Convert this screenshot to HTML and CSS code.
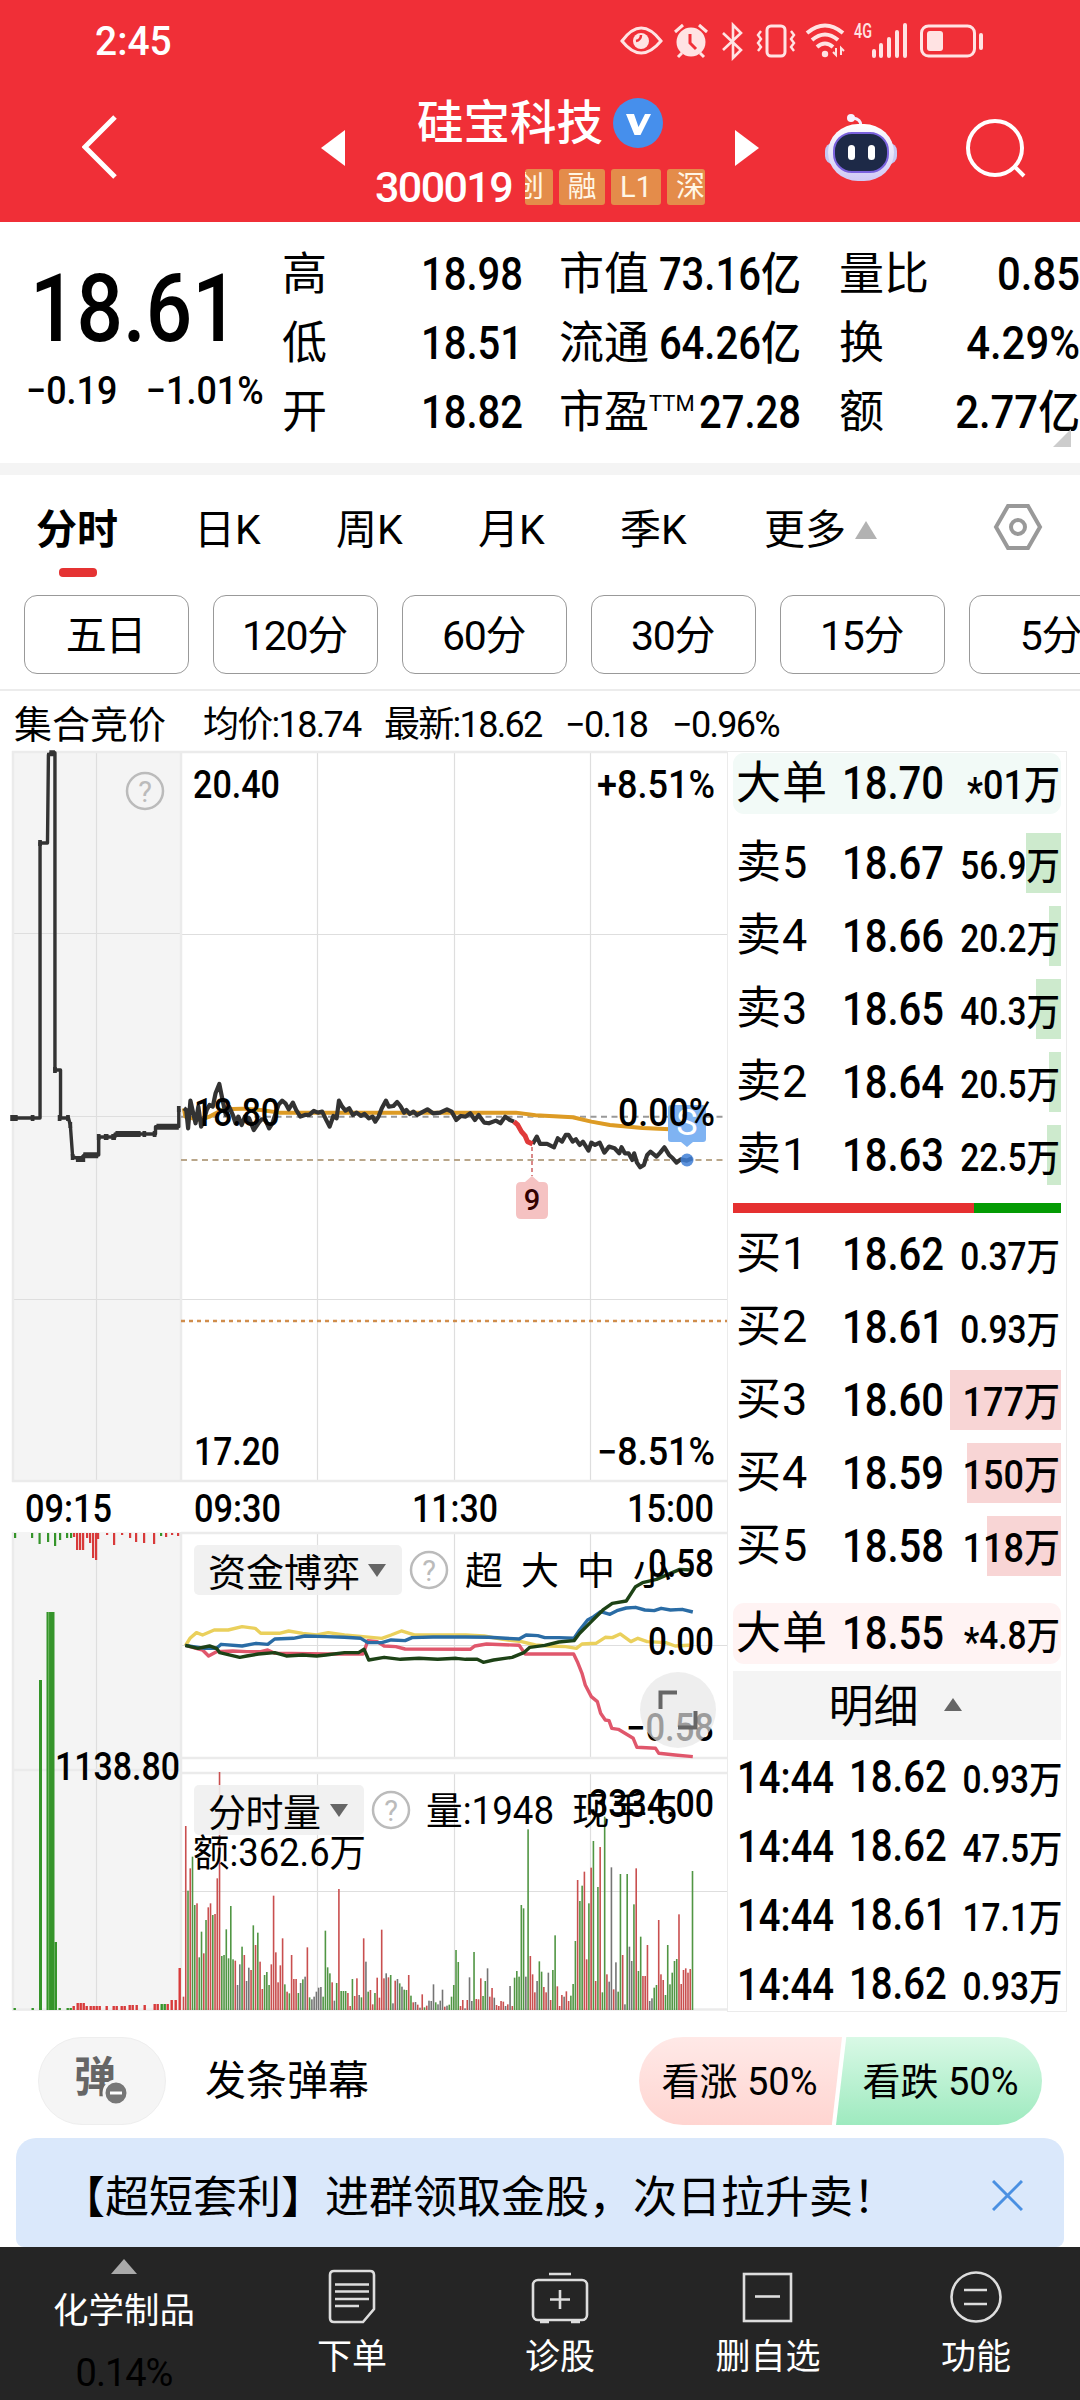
FILE: index.html
```html
<!DOCTYPE html>
<html lang="zh-CN">
<head>
    <meta charset="UTF-8" />
    <meta name="viewport" content="width=device-width, initial-scale=1.0"/>
    <title>硅宝科技 300019</title>
    <link rel="stylesheet" href="styles.css">
</head>
<body>
    <header class="top">
        <div class="status-bar">
            <span class="clock num">2:45</span>
            <svg class="status-icons" width="366" height="40" viewBox="619 20 366 40" fill="none" stroke="#ffe3e3" stroke-width="3">
                <!-- eye -->
                <path d="M622 40Q641 14 661 40Q641 64 622 40Z"/>
                <circle cx="641" cy="40" r="8" fill="#ffe3e3" stroke="none"/>
                <path d="M641 34a6 6 0 0 1-5 6" stroke="#f02f37" stroke-width="2.5"/>
                <!-- alarm -->
                <circle cx="691" cy="41" r="14.5" fill="#ffe3e3" stroke="none"/>
                <path d="M675 31l8-7M707 31l-8-7M682 52l-4 4M700 52l4 4"/>
                <path d="M690 33v9l6 6" stroke="#f02f37"/>
                <!-- bluetooth -->
                <path d="M723 32l18 17-8 8V24l8 8-18 17" stroke-width="2.6"/>
                <!-- vibrate -->
                <rect x="767" y="25" width="18" height="30" rx="4"/>
                <path d="M761 30l-3 4 3 4-3 4 3 4-3 4M791 30l3 4-3 4 3 4-3 4 3 4" stroke-width="2.4"/>
                <!-- wifi -->
                <path d="M807 32q18-15 36 0M812 39q13-11 26 0M817 46q8-7 16 0" stroke-width="4"/>
                <circle cx="825" cy="53" r="3.2" fill="#ffe3e3" stroke="none"/>
                <path d="M836 47v7l-3-3M841 54v-7l3 3" stroke-width="2"/>
                <!-- signal -->
                <path d="M874 50v5M881 44v11M889 38v17M897 31v24M905 24v31" stroke-width="4" stroke-linecap="round"/>
                <!-- battery -->
                <rect x="921.5" y="25" width="53" height="30" rx="7"/>
                <rect x="927" y="30" width="16" height="20" rx="3" fill="#ffe3e3" stroke="none"/>
                <path d="M981 34v13" stroke-width="4" stroke-linecap="round"/>
                <text x="854" y="37" class="net-type" textLength="18" lengthAdjust="spacingAndGlyphs">4G</text>
            </svg>
        </div>
        <nav class="title-bar">
            <svg class="back" width="36" height="66" viewBox="0 0 36 66" fill="none" stroke="#fff" stroke-width="5"><path d="M33 2L3 32l30 30"/></svg>
            <svg class="prev" width="24" height="36" viewBox="0 0 24 36"><path d="M24 0v36L0 18z" fill="#fff"/></svg>
            <div class="stock">
                <div class="stock-name">硅宝科技
                    <svg width="50" height="50" viewBox="0 0 50 50"><circle cx="25" cy="25" r="25" fill="#468fec"/><path d="M13 16h8l4.500 13L32 16h6L27.500 37h-6z" fill="#fff"/></svg>
                </div>
                <div class="stock-code">
                    <span class="code">300019</span>
                    <div class="tags"><i class="cut-left"><b>创</b></i><i>融</i><i class="wide">L1</i><i class="cut-right">深</i></div>
                </div>
            </div>
            <svg class="next" width="24" height="36" viewBox="0 0 24 36"><path d="M0 0v36l24-18z" fill="#fff"/></svg>
            <svg class="robot" width="72" height="68" viewBox="0 0 72 68">
                <defs><linearGradient id="helmet" x1="0" y1="0" x2="0" y2="1"><stop offset="0" stop-color="#fff"/><stop offset="1" stop-color="#cfc9f5"/></linearGradient></defs>
                <path d="M36 12q0-7-8-8" fill="none" stroke="#f3eeff" stroke-width="3"/>
                <circle cx="26" cy="4" r="4" fill="#f6f2ff"/>
                <rect x="0" y="29" width="72" height="21" rx="8" fill="#c6c7f2"/>
                <rect x="3" y="10" width="66" height="57" rx="30" fill="url(#helmet)"/>
                <rect x="9" y="19" width="54" height="39" rx="18" fill="#1d2947" stroke="#7a62dd" stroke-width="2"/>
                <rect x="23" y="31" width="7" height="15" rx="3.5" fill="#fff"/>
                <rect x="43" y="31" width="7" height="15" rx="3.5" fill="#fff"/>
            </svg>
            <svg class="search" width="62" height="62" viewBox="0 0 62 62" fill="none" stroke="#fff" stroke-width="4"><circle cx="29" cy="31" r="27"/><path d="M48 49l10 10"/></svg>
        </nav>
    </header>

    <section class="quote">
        <div class="price-box">
            <div class="price num">18.61</div>
            <div class="change num"><span>−0.19</span><span>−1.01%</span></div>
        </div>
        <dl class="stats first">
            <dt>高</dt><dd class="num">18.98</dd>
            <dt>低</dt><dd class="num">18.51</dd>
            <dt>开</dt><dd class="num">18.82</dd>
        </dl>
        <dl class="stats second">
            <dt>市值</dt><dd class="num">73.16亿</dd>
            <dt>流通</dt><dd class="num">64.26亿</dd>
            <dt>市盈<sup>TTM</sup></dt><dd class="num">27.28</dd>
        </dl>
        <dl class="stats third">
            <dt>量比</dt><dd class="num">0.85</dd>
            <dt>换</dt><dd class="num">4.29%</dd>
            <dt>额</dt><dd class="num">2.77亿</dd>
        </dl>
        <svg class="corner" width="18" height="18" viewBox="0 0 18 18"><path d="M18 0v18H0z" fill="#ccc"/></svg>
    </section>

    <div class="tabs">
        <span class="tab active">分时</span>
        <span class="tab">日K</span>
        <span class="tab">周K</span>
        <span class="tab">月K</span>
        <span class="tab">季K</span>
        <span class="tab more">更多<svg width="22" height="18" viewBox="0 0 22 18"><path d="M11 0l11 18H0z" fill="#b2b2b2"/></svg></span>
        <svg class="setting" width="50" height="46" viewBox="0 0 50 46" fill="none" stroke="#999" stroke-width="4"><path d="M15 2h20l12 21-12 21H15L3 23z"/><circle cx="25" cy="23" r="7"/></svg>
    </div>
    <div class="periods">
        <span>五日</span><span>120分</span><span>60分</span><span>30分</span><span>15分</span><span>5分</span>
    </div>

    <div class="info">
        <span class="auction">集合竞价</span>
        <span class="avg">均价:18.74</span>
        <span class="last">最新:18.62</span>
        <span class="diff">−0.18</span>
        <span class="pct">−0.96%</span>
    </div>

    <main class="board">
        <svg class="chart" width="727" height="1262" viewBox="0 750 727 1262">
            <!-- panels and grid -->
            <rect x="12" y="751" width="169" height="731" fill="#f4f4f4"/>
            <rect x="12" y="1532" width="169" height="479" fill="#f4f4f4"/>
            <g class="grid">
                <path d="M96.5 751V1481M96.5 1532V2010M12 933.5H181M12 1116.5H181M12 1299.5H181M317.5 752V1481M454.5 752V1481M590.5 752V1481M181 934.5H727M181 1299.5H727"/>
                <path d="M317.5 1533V1758M454.5 1533V1758M590.5 1533V1758M181 1645.5H727M317.5 1773V2010M454.5 1773V2010M590.5 1773V2010M181 1891.5H727"/>
            </g>
            <g class="frame">
                <path d="M12 752H727M13 751V1482M181 751V1482M12 1481H727M13 1532V2010M181 1532V2010M181 1533H727M181 1758H727M181 1773H727M12 1770H181M12 2009.5H727"/>
            </g>
            <path d="M181 1116.7H727" stroke="#999" stroke-width="2" stroke-dasharray="6 4.5"/>
            <path d="M181 1160H727" stroke="#b9a68a" stroke-width="2" stroke-dasharray="6 4.5"/>
            <path d="M181 1321H727" stroke="#d08d4c" stroke-width="2.5" stroke-dasharray="4 4"/>

            <g id="volume"></g>
            <g id="auction"></g>

            <!-- price lines -->
            <g class="line" transform="translate(0 740) scale(.4656 .3333)">
                <path stroke="#333" stroke-width="2.5" d="M28 1134H86V309H102L104 45L112 38H118V990H130V1134H147L151 1155L156 1250L172 1258L181 1245H212V1191H247V1182H334V1160H384V1107"/>
                <path class="dots" d="M22 1134h16M66 1134h8M82 309h8M101 47h6M106 40h12M114 990h8M124 1134h8M142 1134h8M147 1155h8M152 1251h8M163 1257h20M179 1246h32M208 1191h8M223 1191h10M239 1191h10M248 1182h54M306 1182h8M328 1182h8M336 1160h48M380 1107h8"/>
                <path stroke="#fff4c4" stroke-width="7" d="M395 1105L398 1130L430 1140L450 1130L480 1108L520 1106L560 1110L600 1118H1108L1150 1126L1230 1132L1270 1145L1310 1155L1380 1164L1440 1168H1490"/>
                <path class="avg-line" d="M395 1105L398 1130L430 1140L450 1130L480 1108L520 1106L560 1110L600 1118H1108L1150 1126L1230 1132L1270 1145L1310 1155L1380 1164L1440 1168H1490"/>
                <path class="price-line" d="M395 1105L400 1110L404 1165L409 1082L415 1120L420 1150L426 1100L432 1160L438 1140L444 1110L450 1095L457 1100L463 1060L471 1032L478 1080L485 1125L492 1100L500 1125L506 1150L512 1130L519 1155L526 1130L535 1135L545 1170L555 1150L562 1138L570 1140L578 1165L585 1150L592 1120L598 1095L606 1082L613 1090L620 1108L629 1088L636 1110L645 1130L655 1125L664 1125L674 1113L683 1118L692 1115L700 1138L708 1160L716 1128L723 1135L728 1082L735 1100L742 1112L750 1105L758 1125L766 1118L775 1128L783 1122L792 1135L800 1130L806 1145L813 1130L820 1105L829 1082L835 1100L845 1098L853 1086L860 1098L868 1118L873 1110L880 1122L888 1115L896 1125L905 1118L918 1108L930 1120L945 1118L960 1108L970 1115L980 1140L990 1128L1000 1130L1010 1120L1020 1140L1028 1125L1040 1148L1050 1150L1065 1142L1075 1150L1085 1130L1095 1140L1104 1145"/>
                <path class="price-line" d="M1144 1212L1153 1190L1160 1212L1175 1212L1190 1222L1198 1195L1207 1205L1215 1185L1221 1185L1230 1205L1237 1198L1245 1215L1252 1205L1264 1232L1270 1208L1278 1215L1288 1208L1298 1238L1308 1220L1320 1225L1330 1240L1335 1222L1342 1240L1350 1240L1358 1260L1362 1240L1368 1268L1375 1282L1383 1275L1390 1245L1397 1235L1410 1250L1418 1238L1427 1222L1437 1245L1445 1255L1453 1268L1462 1258L1475 1262L1487 1255"/>
                <path class="turn-line" d="M1104 1145L1112 1155L1120 1175L1128 1188L1133 1205L1144 1212"/>
            </g>

            <!-- sell point and turning point -->
            <path d="M672 1105h31a3 3 0 0 1 3 3v31a3 3 0 0 1-3 3h-10l-6 5-6-5h-10a3 3 0 0 1-3-3v-31a3 3 0 0 1 3-3z" fill="#7fb3f2"/>
            <text class="mark-s" x="687" y="1135">S</text>
            <circle cx="687" cy="1160" r="6.5" fill="#3f7fd6" fill-opacity=".85"/>
            <path d="M532 1147V1176" stroke="#c03a3a" stroke-width="1.2" stroke-dasharray="4 3"/>
            <path d="M532 1176l7 6h4q5 0 5 5v27q0 5-5 5h-22q-5 0-5-5v-27q0-5 5-5h4z" fill="#f5c2c2"/>
            <text class="mark-9" x="532" y="1210">9</text>

            <!-- money flow lines -->
            <g class="line flow" transform="translate(0 1520) scale(.4656 .3333)">
                <path stroke="#ead05c" d="M398 378L408 355L422 338L435 345L460 330L490 330L520 320L548 325L560 340L600 340L620 333L650 340L680 345L705 338L740 345L780 350L820 355L840 345L862 333L890 345L930 345L1000 345L1040 348L1080 358L1120 365L1150 375L1180 378L1215 380L1238 385L1250 372L1280 370L1300 352L1315 353L1332 342L1355 365L1370 355L1390 365L1430 368L1450 378L1488 375"/>
                <path stroke="#e0576c" d="M398 376L435 390L448 408L465 395L500 393L530 395L560 395L575 390L590 400L700 402L780 402L790 362L810 365L825 378L850 380L870 387L1010 388L1020 378L1045 372L1115 376L1128 402L1232 402L1240 425L1250 460L1257 495L1270 530L1283 545L1290 580L1300 600L1308 602L1314 625L1328 628L1360 655L1368 682L1408 685L1415 700L1450 705L1488 710"/>
                <path stroke="#2a6ca5" d="M398 376L440 385L465 385L475 373L520 378L550 370L575 373L590 357L630 355L655 348L700 350L740 352L775 355L790 368L820 368L840 360L870 362L885 353L930 351L1000 351L1050 352L1115 357L1130 345L1155 347L1170 353L1200 353L1233 355L1245 330L1262 300L1275 290L1290 275L1310 283L1325 272L1345 264L1365 262L1385 270L1405 272L1420 265L1440 270L1465 268L1488 276"/>
                <path stroke="#1d4216" d="M398 376L425 385L450 378L465 385L472 398L515 412L530 408L555 402L590 398L615 408L650 405L680 408L700 405L740 398L770 398L782 388L792 420L825 412L860 418L900 415L940 418L980 415L1000 418L1025 418L1038 427L1060 420L1100 412L1125 398L1138 382L1170 376L1200 366L1233 362L1245 340L1270 305L1295 270L1315 250L1345 243L1365 200L1380 188L1410 178L1440 160L1460 148L1485 150"/>
            </g>

            <!-- index selectors -->
            <rect x="194" y="1545" width="208" height="50" rx="5" fill="#f0f0f0" fill-opacity=".9"/>
            <path d="M368 1564h18l-9 13z" fill="#666"/>
            <rect x="194" y="1785" width="170" height="50" rx="5" fill="#f0f0f0" fill-opacity=".9"/>
            <path d="M330 1804h18l-9 13z" fill="#666"/>
            <g class="help">
                <circle cx="145" cy="791" r="18"/><text x="145" y="802">?</text>
                <circle cx="429" cy="1570" r="18"/><text x="429" y="1581">?</text>
                <circle cx="391" cy="1810" r="18"/><text x="391" y="1821">?</text>
            </g>

            <g class="cn">
                <text x="208" y="1586" textLength="152">资金博弈</text>
                <text x="465" y="1584">超</text>
                <text x="521" y="1584">大</text>
                <text x="577" y="1584">中</text>
                <text x="633" y="1584">小</text>
                <text x="208" y="1826" textLength="113">分时量</text>
                <text x="426" y="1824" textLength="128" lengthAdjust="spacingAndGlyphs">量:1948</text>
                <text x="572" y="1824" textLength="105" lengthAdjust="spacingAndGlyphs">现手:5</text>
                <text x="193" y="1866" textLength="173" lengthAdjust="spacingAndGlyphs">额:362.6万</text>
            </g>
            <g class="axis">
                <text x="193" y="798" textLength="87" lengthAdjust="spacingAndGlyphs">20.40</text>
                <text x="597" y="798" textLength="118" lengthAdjust="spacingAndGlyphs">+8.51%</text>
                <text x="194" y="1126" textLength="86" lengthAdjust="spacingAndGlyphs">18.80</text>
                <text x="618" y="1126" textLength="97" lengthAdjust="spacingAndGlyphs">0.00%</text>
                <text x="194" y="1465" textLength="86" lengthAdjust="spacingAndGlyphs">17.20</text>
                <text x="597" y="1465" textLength="118" lengthAdjust="spacingAndGlyphs">−8.51%</text>
                <text x="25" y="1522" textLength="87" lengthAdjust="spacingAndGlyphs">09:15</text>
                <text x="194" y="1522" textLength="87" lengthAdjust="spacingAndGlyphs">09:30</text>
                <text x="412" y="1522" textLength="86" lengthAdjust="spacingAndGlyphs">11:30</text>
                <text x="627" y="1522" textLength="87" lengthAdjust="spacingAndGlyphs">15:00</text>
                <text x="648" y="1577" textLength="66" lengthAdjust="spacingAndGlyphs">0.58</text>
                <text x="648" y="1655" textLength="66" lengthAdjust="spacingAndGlyphs">0.00</text>
                <text x="626" y="1741" textLength="88" lengthAdjust="spacingAndGlyphs">−0.58</text>
                <text x="55" y="1780" textLength="125" lengthAdjust="spacingAndGlyphs">1138.80</text>
                <text x="589" y="1817" textLength="125" lengthAdjust="spacingAndGlyphs">3334.00</text>
            </g>

            <!-- rotate button -->
            <circle cx="678" cy="1710" r="38" fill="#e6e6e6" fill-opacity=".68"/>
            <path d="M660.500 1709V1692.500H677M678 1727.500H695.500V1711" fill="none" stroke="#666" stroke-width="4"/>
        </svg>

        <aside class="book">
            <div class="row big sell"><span class="side">大单</span><span class="bid num">18.70</span><span class="vol large num"><b class="star">*</b>01万</span></div>
            <div class="orders">
                <div class="row sell"><span class="side">卖5</span><span class="bid num">18.67</span><span class="vol num">56.9万</span><i style="width:35px"></i></div>
                <div class="row sell"><span class="side">卖4</span><span class="bid num">18.66</span><span class="vol num">20.2万</span><i style="width:12px"></i></div>
                <div class="row sell"><span class="side">卖3</span><span class="bid num">18.65</span><span class="vol num">40.3万</span><i style="width:25px"></i></div>
                <div class="row sell"><span class="side">卖2</span><span class="bid num">18.64</span><span class="vol num">20.5万</span><i style="width:12px"></i></div>
                <div class="row sell"><span class="side">卖1</span><span class="bid num">18.63</span><span class="vol num">22.5万</span><i style="width:14px"></i></div>
            </div>
            <div class="ratio"><i style="width:241px"></i></div>
            <div class="orders">
                <div class="row buy"><span class="side">买1</span><span class="bid num">18.62</span><span class="vol num">0.37万</span></div>
                <div class="row buy"><span class="side">买2</span><span class="bid num">18.61</span><span class="vol num">0.93万</span></div>
                <div class="row buy"><span class="side">买3</span><span class="bid num">18.60</span><span class="vol large num">177万</span><i style="width:111px"></i></div>
                <div class="row buy"><span class="side">买4</span><span class="bid num">18.59</span><span class="vol large num">150万</span><i style="width:94px"></i></div>
                <div class="row buy"><span class="side">买5</span><span class="bid num">18.58</span><span class="vol large num">118万</span><i style="width:74px"></i></div>
            </div>
            <div class="row big buy"><span class="side">大单</span><span class="bid num">18.55</span><span class="vol num"><b class="star">*</b>4.8万</span></div>
            <div class="detail-head">明细<svg width="18" height="13" viewBox="0 0 18 13"><path d="M9 0l9 13H0z" fill="#666"/></svg></div>
            <div class="details">
                <div class="deal"><span class="time num">14:44</span><span class="bid num">18.62</span><span class="vol num">0.93万</span></div>
                <div class="deal"><span class="time num">14:44</span><span class="bid num">18.62</span><span class="vol num">47.5万</span></div>
                <div class="deal"><span class="time num">14:44</span><span class="bid num">18.61</span><span class="vol num">17.1万</span></div>
                <div class="deal"><span class="time num">14:44</span><span class="bid num">18.62</span><span class="vol num">0.93万</span></div>
            </div>
        </aside>
    </main>

    <div class="danmu">
        <div class="danmu-switch">弹<svg width="30" height="30" viewBox="0 0 30 30"><circle cx="15" cy="15" r="12" fill="#777" stroke="#f5f5f5" stroke-width="3"/><path d="M9 15h12" stroke="#fff" stroke-width="3"/></svg></div>
        <span class="danmu-input">发条弹幕</span>
        <div class="vote">
            <span class="up">看涨 50%</span>
            <span class="down">看跌 50%</span>
        </div>
    </div>

    <div class="banner">
        <span>【超短套利】进群领取金股，次日拉升卖！</span>
        <svg width="31" height="31" viewBox="0 0 31 31" stroke="#4a90e2" stroke-width="3"><path d="M1 1l29 29M30 1L1 30"/></svg>
    </div>

    <footer class="bottom">
        <div class="sector">
            <svg width="26" height="15" viewBox="0 0 26 15"><path d="M13 0l13 15H0z" fill="#aaa"/></svg>
            <span>化学制品</span>
            <em>0.14%</em>
        </div>
        <div class="item">
            <svg width="60" height="58" viewBox="0 0 60 58"><path d="M12 3h36q4 0 4 4v34L41 54H12q-4 0-4-4V7q0-4 4-4z"/><path d="M13 16.500h34M13 23.500h34M13 31h34M13 38h24"/></svg>
            <span>下单</span>
        </div>
        <div class="item">
            <svg width="60" height="58" viewBox="0 0 60 58"><rect x="3" y="12" width="54" height="40" rx="5"/><path d="M19 6h22M20 31.500h20M30 22v19"/><path d="M10 54h9M41 54h9"/></svg>
            <span>诊股</span>
        </div>
        <div class="item">
            <svg width="60" height="58" viewBox="0 0 60 58"><rect x="6" y="6" width="47" height="47"/><path d="M17 28.500h25"/></svg>
            <span>删自选</span>
        </div>
        <div class="item">
            <svg width="60" height="58" viewBox="0 0 60 58"><circle cx="30" cy="29" r="24.500"/><path d="M18 22h23M18 36h23"/></svg>
            <span>功能</span>
        </div>
    </footer>

    <script src="chart.js"></script>
</body>
</html>
```
FILE: styles.css
```css
/* Basic Styles */
* {
    box-sizing: border-box;
}

body {
    margin: 0;
    width: 1080px;
    height: 2400px;
    overflow: hidden;
    display: flex;
    flex-direction: column;
    background: #fff;
    color: #000;
    font-family: Roboto, "Noto Sans CJK SC", sans-serif;
    font-size: 40px;
    line-height: 1;
    white-space: nowrap;
}

svg {
    display: block;
    flex: none;
}

i, em {
    font-style: normal;
}

/* narrow digits */
.num {
    font-weight: 500;
    transform: scaleX(.87);
    transform-origin: left;
}

/* Header */
.top {
    height: 222px;
    flex: none;
    background: #f02f37;
    color: #fff;
}

.status-bar {
    height: 82px;
    padding: 0 95px;
    display: flex;
    justify-content: space-between;
    align-items: center;
}

.clock {
    font-size: 41px;
    transform: scaleX(.95);
}

.net-type {
    font-size: 20px;
    font-weight: 500;
    fill: #ffe3e3;
    stroke: none;
}

.title-bar {
    height: 132px;
    padding-left: 82px;
    display: flex;
    align-items: center;
}

.prev {
    margin-left: 203px;
}

.stock {
    width: 390px;
    padding-top: 14px;
}

.stock-name,
.stock-code {
    height: 64px;
    display: flex;
    justify-content: center;
    align-items: center;
}

.stock-name {
    gap: 10px;
    font-size: 46.5px;
    font-weight: 500;
}

.stock-code {
    gap: 13px;
    font-size: 43px;
}

.code {
    font-weight: 500;
    letter-spacing: -1.6px;
}

.tags {
    display: flex;
    gap: 6px;
}

.tags i {
    width: 46px;
    height: 36px;
    border-radius: 3px;
    background: #e48c4a;
    color: #fff6e5;
    font-size: 29px;
    line-height: 37px;
    text-align: center;
    overflow: hidden;
}

.tags .wide {
    width: 50px;
}

.tags .cut-left {
    width: 28px;
    display: flex;
    justify-content: flex-end;
    padding-right: 9px;
}

.tags .cut-left b {
    font-weight: 400;
}

.tags .cut-right {
    width: 38px;
    padding-left: 9px;
    text-align: left;
}

.robot {
    margin-left: 66px;
}

.search {
    margin-left: 69px;
}

/* Quote */
.quote {
    position: relative;
    height: 253px;
    flex: none;
    display: flex;
    padding-top: 18px;
    border-bottom: 12px solid #f4f4f4;
}

.price-box {
    width: 282px;
    padding-left: 28px;
}

.price {
    margin-top: 19px;
    font-size: 94px;
    line-height: 100px;
    transform: translateX(2px) scaleX(.87);
}

.change {
    display: flex;
    gap: 31px;
    margin-top: 12px;
    font-size: 39px;
    line-height: 40px;
    transform: translateX(-2px) scaleX(.92);
}

.stats {
    margin: 0;
    display: grid;
    grid-template-columns: 90px minmax(0, 1fr);
    grid-auto-rows: 69px;
    font-size: 45px;
    line-height: 69px;
}

.stats dd {
    margin: 0;
    display: flex;
    justify-content: flex-end;
    font-size: 46px;
    transform-origin: right;
}

.stats sup {
    font-size: 22px;
    line-height: 0;
    vertical-align: 17px;
}

.first {
    width: 241px;
}

.second {
    width: 242px;
    margin-left: 36px;
}

.third {
    width: 241px;
    margin-left: 38px;
}

.third .num {
    transform: scaleX(.91);
}

.corner {
    position: absolute;
    right: 9px;
    bottom: 16px;
}

/* Period tabs */
.tabs {
    height: 120px;
    flex: none;
    display: flex;
    align-items: flex-start;
    padding: 34px 0 0 36px;
    font-size: 41px;
    line-height: 42px;
}

.tab {
    width: 142px;
    padding-left: 15px;
}

.tab.active {
    width: 143px;
    padding: 0;
    font-weight: 700;
}

.tab.active::after {
    content: "";
    display: block;
    width: 38px;
    height: 9px;
    margin: 17px 0 0 23px;
    border-radius: 4px;
    background: #e53333;
}

.tab.more {
    width: 246px;
    display: flex;
    align-items: center;
    gap: 9px;
    padding-left: 17px;
}

.setting {
    margin-top: -5px;
}

.periods {
    height: 96px;
    flex: none;
    display: flex;
    gap: 24px;
    padding-left: 24px;
    border-bottom: 2px solid #ececec;
}

.periods span {
    flex: none;
    width: 165px;
    height: 79px;
    border: 1.5px solid #999;
    border-radius: 13px;
    font-size: 41px;
    line-height: 80px;
    text-align: center;
    text-indent: -2px;
    letter-spacing: -1.3px;
}

.info {
    height: 59px;
    flex: none;
    display: flex;
    padding-left: 14px;
    font-size: 36px;
    line-height: 68px;
    letter-spacing: -1.7px;
}

.auction {
    width: 189px;
    font-size: 38px;
    letter-spacing: 0;
}

.avg,
.last {
    width: 181px;
}

.diff {
    width: 107px;
}

/* Chart and order book */
.board {
    height: 1262px;
    flex: none;
    display: flex;
}

.grid path {
    stroke: #dedede;
    stroke-width: 1.2;
}

.frame path {
    stroke: #ebebeb;
    stroke-width: 2.5;
}

.line path {
    fill: none;
    stroke-width: 3.4;
    stroke-linejoin: round;
    vector-effect: non-scaling-stroke;
}

.line .dots {
    stroke: #333;
    stroke-width: 6;
}

.line .price-line {
    stroke: #333;
    stroke-width: 4.2;
}

.line .avg-line {
    stroke: #dd9b25;
    stroke-width: 4;
}

.line .turn-line {
    stroke: #e03a3a;
    stroke-width: 5;
}

.axis text {
    font-size: 38px;
    font-weight: 500;
}

.cn text {
    font-size: 38px;
}

.help circle {
    fill: none;
    stroke: #bbb;
    stroke-width: 2.5;
}

.help text {
    fill: #bbb;
    font-size: 29px;
    text-anchor: middle;
}

.mark-s {
    fill: #fff;
    font-size: 36px;
    text-anchor: middle;
}

.mark-9 {
    fill: #300;
    font-size: 29px;
    font-weight: 500;
    text-anchor: middle;
}

.book {
    width: 340px;
    height: 1261px;
    margin-top: 1px;
    padding: 1px 5px 0;
    border: 1px solid #ebebeb;
}

.row,
.deal {
    position: relative;
    height: 60px;
    display: flex;
    align-items: center;
    padding: 0 1px 0 3px;
    font-size: 45px;
}

.row.big {
    height: 61px;
    border-radius: 11px;
}

.big.sell {
    background: #f2faf7;
}

.big.buy {
    margin-top: 27px;
    background: #fff3f3;
}

.orders {
    display: flex;
    flex-direction: column;
    gap: 13px;
    margin-top: 19px;
}

.side {
    width: 106px;
    padding-bottom: 1px;
    letter-spacing: 1px;
}

.bid {
    width: 104px;
    padding-bottom: 1px;
    font-size: 46px;
}

.vol {
    flex: 1;
    display: flex;
    justify-content: flex-end;
    align-items: center;
    font-size: 38px;
    padding-top: 5px;
    transform: scaleX(.88);
    transform-origin: right;
}

.vol.large {
    font-size: 40px;
    transform: scaleX(.9);
}

.star {
    font-weight: 500;
    font-size: 40px;
    height: 26px;
}

.row span {
    z-index: 1;
}

/* volume bar behind the text */
.row i {
    position: absolute;
    right: 0;
    top: 0;
    height: 60px;
    background: #cdeacd;
}

.buy i {
    background: #f8d5d5;
}

.ratio {
    height: 10px;
    margin: 18px 0 -8px;
    background: #049b04;
}

.ratio i {
    display: block;
    height: 10px;
    background: #e53030;
}

.detail-head {
    height: 69px;
    margin-top: 7px;
    display: flex;
    justify-content: center;
    align-items: center;
    gap: 25px;
    padding: 3px 4px 0 0;
    background: #f4f4f4;
    font-size: 45px;
}

.detail-head svg {
    margin-bottom: 6px;
}

.details {
    padding-top: 3px;
}

.deal {
    height: 69px;
    padding: 0 4px 0 4px;
}

.time {
    width: 112px;
    font-size: 44px;
}

.deal .bid {
    width: 100px;
    font-size: 44px;
}

/* Comments row */
.danmu {
    height: 126px;
    flex: none;
    display: flex;
    align-items: center;
    padding: 12px 38px 0;
}

.danmu-switch {
    position: relative;
    width: 128px;
    height: 88px;
    border-radius: 44px;
    border: 1px solid #eee;
    background: #f5f5f5;
    color: #666;
    font-size: 42px;
    font-weight: 700;
    line-height: 80px;
    padding-left: 35px;
}

.danmu-switch svg {
    position: absolute;
    left: 62px;
    top: 40px;
}

.danmu-input {
    flex: 1;
    margin-left: 39px;
    font-size: 41px;
    line-height: 90px;
}

.vote {
    width: 403px;
    height: 88px;
    display: flex;
    border-radius: 44px;
    overflow: hidden;
    font-size: 38px;
    line-height: 90px;
    text-align: center;
}

.up {
    width: 205px;
    padding-right: 2px;
    background: linear-gradient(#ffe9e7, #ffd5d1);
    clip-path: polygon(0 0, 100% 0, 95% 100%, 0 100%);
}

.down {
    width: 208px;
    margin-left: -6px;
    padding-left: 3px;
    background: linear-gradient(#d9f9e6, #9eeabf);
    clip-path: polygon(5% 0, 100% 0, 100% 100%, 0 100%);
}

/* Banner */
.banner {
    height: 109px;
    flex: none;
    margin: 0 16px;
    padding: 5px 41px 0 45px;
    display: flex;
    justify-content: space-between;
    align-items: center;
    border-radius: 20px 20px 8px 8px;
    background: #dae8fb;
    font-size: 44px;
}

.banner span {
    padding-top: 6px;
}

/* Bottom bar */
.bottom {
    height: 153px;
    flex: none;
    display: flex;
    background: #252525;
    color: #fff;
    font-size: 35px;
}

.sector {
    width: 248px;
    display: flex;
    flex-direction: column;
    align-items: center;
    padding-top: 12px;
}

.sector span {
    margin-top: 20px;
    font-size: 35.5px;
}

.sector em {
    margin-top: 24px;
    color: #000;
    font-size: 38px;
    letter-spacing: -1px;
}

.item {
    width: 208px;
    display: flex;
    flex-direction: column;
    align-items: center;
    padding-top: 21px;
}

.item span {
    margin-top: 14px;
}

.item svg {
    fill: none;
    stroke: #ddd;
    stroke-width: 2.6;
}
```
FILE: chart.js
```js
const SVG = "http://www.w3.org/2000/svg";

function addBar(group, x, top, bottom, width, color) {
    const rect = document.createElementNS(SVG, "rect");
    rect.setAttribute("x", x);
    rect.setAttribute("y", top);
    rect.setAttribute("width", width);
    rect.setAttribute("height", bottom - top);
    rect.setAttribute("fill", color);
    group.appendChild(rect);
}

// one entry per minute: r = up, g = down, k = flat, number = distance from the panel top
const minutes = `r740 r228 g422 r355 g320 g465 r460 g622 g545 r610 g510 r472 r460 g495 r492 r385 r66 g618 g615 g538 g625 g468 g628 r632 k705
k643 g590 r615 k693 k653 r660 g526 r585 g548 r635 r717 g675 g666 g705 r643 r437 r607 r697 r646 r565 g703 r725 g730 r615 r687
r687 g729 k699 g688 k680 r592 g742 k748 k740 k725 k713 k711 g740 g542 g652 g670 r697 k752 g699 r417 g723 g723 g723 r729 r768
g687 r738 r685 k735 g742 r565 k635 g725 r720 r763 g729 r683 r743 r539 r685 k670 r682 g675 k760 r692 k687 g700 k710 g719 g720
r675 g737 r757 k756 r764 k773 r733 g772 r767 k752 k753 k703 g757 k763 k752 k719 r770 k767 g764 g740 g705 g600 g636 r768 r750
k775 r750 k682 k753 g606 r747 r748 r685 g738 g693 k655 r740 r714 k743 r765 r768 r753 r755 k768 r763 k708 r768 g683 g663 g680
g465 g475 k680 g238 r618 r673 r727 k693 g634 g665 r711 r727 k668 r750 g660 g556 r709 r768 r735 k740 r724 r753 g737 g702 g573
r390 g453 g407 r365 r628 g460 r353 g273 r693 g411 r291 g727 g200 r673 k695 k352 r718 k637 g725 g372 r615 k763 g372 k590 k633
g463 r355 g663 g560 r678 r678 r585 k753 k745 g713 g705 r510 r673 r690 g735 g585 g703 g668 g633 g627 r493 r702 r660 r655 r668
r657 g363`.split(/\s+/);

const volume = document.getElementById("volume");
const colors = { r: "#c94f4f", g: "#519644", k: "#757575" };
const step = (692.5 - 183.5) / (minutes.length - 1);
minutes.forEach((item, i) => {
    addBar(volume, 182.7 + i * step, 1750 + Number(item.slice(1)) / 3, 2010, 1.6, colors[item[0]]);
});

// call auction: unmatched volume hangs from the top, matched volume stands at the bottom
const auction = document.getElementById("auction");
const green = "#35942a";
const red = "#d83a3a";
[[15, 5, green], [32, 5, green], [39.5, 11, green], [48, 9, green], [55, 13, green], [60, 7, green], [67, 5, green], [71, 5, green],
 [74, 4, red], [77, 17, red], [80, 17, red], [83, 17, red], [87, 5, red], [90, 10, red], [93, 25, red], [96, 27, red], [98, 6, red],
 [107, 2, red], [114, 12, red], [122, 2, red], [130, 5, red], [136, 9, red], [144, 10, red], [154, 11, red], [161, 3, green],
 [166, 4, red], [172, 2, red], [178, 3, red]].forEach(([x, h, c]) => addBar(auction, x - 1, 1533, 1533 + h, 2.2, c));
addBar(auction, 39, 1680, 2010, 3, green);
addBar(auction, 46.5, 1612, 2010, 8, green);
addBar(auction, 48.3, 1612, 2010, 0.8, "#7cc070");
addBar(auction, 54.5, 1942, 2010, 2.5, green);
[[15, 2, green], [33, 2, green], [60, 2, green], [68, 2, green], [71, 2, green], [74, 4, red], [78, 7, red], [81, 7, red], [84, 7, red],
 [87, 4, red], [91, 4, red], [94, 4, red], [97, 4, red], [100, 4, red], [107, 4, red], [114, 4, red], [117, 4, red], [122, 4, red],
 [125, 4, red], [130, 5, red], [133, 5, red], [137, 5, red], [145, 5, red], [155, 6, red], [158, 6, red], [162, 6, green],
 [165, 6, green], [168, 6, red], [172, 10, red], [176, 10, red], [180, 42, red]].forEach(([x, h, c]) => addBar(auction, x - 1.5, 2010 - h, 2010, 2.4, c));
```
